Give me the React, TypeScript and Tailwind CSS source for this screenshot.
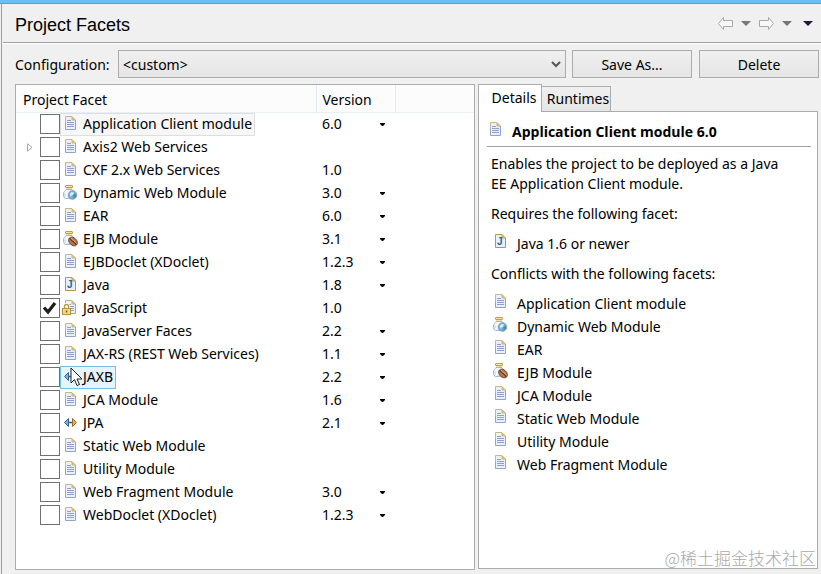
import { useState } from "react";

type IconKind = "doc" | "web" | "ejb" | "java" | "locked" | "arrows";

interface Facet {
  name: string;
  icon: IconKind;
  versions?: string[];
  expandable?: boolean;
}

const FACETS: Facet[] = [
  { name: "Application Client module", icon: "doc", versions: ["6.0", "5.0"] },
  { name: "Axis2 Web Services", icon: "doc", expandable: true },
  { name: "CXF 2.x Web Services", icon: "doc", versions: ["1.0"] },
  { name: "Dynamic Web Module", icon: "web", versions: ["3.0", "2.5"] },
  { name: "EAR", icon: "doc", versions: ["6.0", "5.0"] },
  { name: "EJB Module", icon: "ejb", versions: ["3.1", "3.0"] },
  { name: "EJBDoclet (XDoclet)", icon: "doc", versions: ["1.2.3", "1.2.2"] },
  { name: "Java", icon: "java", versions: ["1.8", "1.7"] },
  { name: "JavaScript", icon: "locked", versions: ["1.0"] },
  { name: "JavaServer Faces", icon: "doc", versions: ["2.2", "2.1"] },
  { name: "JAX-RS (REST Web Services)", icon: "doc", versions: ["1.1", "1.0"] },
  { name: "JAXB", icon: "arrows", versions: ["2.2", "2.1"] },
  { name: "JCA Module", icon: "doc", versions: ["1.6", "1.5"] },
  { name: "JPA", icon: "arrows", versions: ["2.1", "2.0"] },
  { name: "Static Web Module", icon: "doc" },
  { name: "Utility Module", icon: "doc" },
  { name: "Web Fragment Module", icon: "doc", versions: ["3.0", "2.5"] },
  { name: "WebDoclet (XDoclet)", icon: "doc", versions: ["1.2.3", "1.2.2"] },
];

const CONFLICTS: { name: string; icon: IconKind }[] = [
  { name: "Application Client module", icon: "doc" },
  { name: "Dynamic Web Module", icon: "web" },
  { name: "EAR", icon: "doc" },
  { name: "EJB Module", icon: "ejb" },
  { name: "JCA Module", icon: "doc" },
  { name: "Static Web Module", icon: "doc" },
  { name: "Utility Module", icon: "doc" },
  { name: "Web Fragment Module", icon: "doc" },
];

function DocShape() {
  return (
    <>
      <path d="M3.5.5H10L13.5 4v9.5h-10z" fill="#e9f0fa" />
      <path d="M3.5 8V.5H10L13.5 4" fill="none" stroke="#c9b684" />
      <path d="M3.5 7v6.500h10V4" fill="none" stroke="#94a3c8" />
      <path d="M10 1v3h3z" fill="#e3c67c" stroke="#d3b56c" />
      <path d="M5 4.500h4M5 6.500h7M5 8.500h7M5 10.500h7" stroke="#8c9fd0" />
    </>
  );
}

function JarShape() {
  return (
    <>
      <path d="M4 4.500h6c0 1 2.500 2 2.500 4s-1 5-2.500 5H3.500C2 13.500 1.500 11 1.500 9c0-2.500 2-3 2.500-4.500z" fill="#f3f8fe" stroke="#9db1d3" />
      <path d="M3 8.500v3M5 13h4" stroke="#b9cfec" />
      <rect x="3.500" y=".5" width="7" height="2" rx=".5" fill="#fbeab4" stroke="#c89c2e" />
      <path d="M4 4h6" stroke="#d9b659" />
    </>
  );
}

function FacetIcon({ kind }: { kind: IconKind }) {
  return (
    <svg viewBox="0 0 16 16" className="h-4 w-4 shrink-0" aria-hidden="true">
      {kind === "doc" && <DocShape />}
      {kind === "web" && (
        <>
          <JarShape />
          <circle cx="10.500" cy="10" r="4.300" fill="#6fabdc" stroke="#7394c4" strokeWidth=".8" />
          <path d="M7.500 9l2-2 2.500.5-.5 2-2 1-.5 2z" fill="#d3f0e6" />
          <path d="M11.500 9.500l2.500-.5v2.500l-2.500 2z" fill="#3f9a68" />
        </>
      )}
      {kind === "ejb" && (
        <>
          <JarShape />
          <ellipse cx="11" cy="10.500" rx="5" ry="3.600" transform="rotate(45 11 10.500)" fill="#b5784a" stroke="#74401f" strokeWidth=".9" />
          <path d="M8 7c0 3 5.500 3.500 6 7" fill="none" stroke="#5f3115" strokeWidth="1.100" />
          <path d="M8.800 6.800c1 2.500 4.500 3 5.500 5.500" fill="none" stroke="#e8bf9a" strokeWidth=".8" />
        </>
      )}
      {kind === "java" && (
        <>
          <path d="M3.500.5H10L13.500 4v9.500h-10z" fill="#e6f2fb" stroke="#b9934a" />
          <path d="M10 1v3h3z" fill="#e3c67c" stroke="#c9a458" />
          <text x="5" y="11" fontSize="10" fontWeight="700" fontFamily="Liberation Sans, sans-serif" fill="#24659c">
            J
          </text>
        </>
      )}
      {kind === "locked" && (
        <>
          <DocShape />
          <path d="M2.500 9V6.500a2 2 0 0 1 4 0V9" fill="none" stroke="#fff" strokeWidth="3" />
          <path d="M2.500 9V6.500a2 2 0 0 1 4 0V9" fill="none" stroke="#b9973c" strokeWidth="1.300" />
          <rect x=".5" y="8.500" width="8" height="6" fill="#f0d98a" stroke="#b8923a" />
          <path d="M4.500 10.500v2" stroke="#7b5710" strokeWidth="1.500" />
        </>
      )}
      {kind === "arrows" && (
        <>
          <path d="M6 7.500h5" stroke="#35597f" strokeWidth="1.500" />
          <path d="M6.500 3.500v8l-4-4z" fill="#77b0e2" stroke="#336494" />
          <path d="M10.500 3.500v8l4-4z" fill="#eba84d" stroke="#a96a18" />
        </>
      )}
    </svg>
  );
}

function HistoryArrow({ forward = false }: { forward?: boolean }) {
  return (
    <svg viewBox="0 0 15 13" className="h-[13px] w-[15px]" aria-hidden="true">
      <path
        d={forward ? "M14.500 6.500l-5-6v3h-9v6h9v3z" : "M.5 6.500l5-6v3h9v6h-9v3z"}
        fill="#f8f8f8"
        stroke="#a9a9a9"
        strokeLinejoin="round"
      />
    </svg>
  );
}

function Triangle() {
  return (
    <svg viewBox="0 0 10 5" className="h-[5px] w-[10px]" fill="currentColor" aria-hidden="true">
      <path d="M0 0h10L5 5z" />
    </svg>
  );
}

function Pointer() {
  return (
    <svg viewBox="0 0 13 20" className="pointer-events-none absolute left-[9px] top-0 h-5 w-[13px]" aria-hidden="true">
      <path d="M1 1v15l3.500-3.500L7 18.500l2.500-1L7 12h5z" fill="#fff" stroke="#222" />
    </svg>
  );
}

function highlightClass(name: string, selected: string) {
  if (name === "JAXB") return "border-[#70c0e7] bg-[#e5f3fb]";
  if (name === selected) return "border-[#dedede] bg-[#f7f7f7]";
  return "border-transparent";
}

interface FacetRowProps {
  facet: Facet;
  checked: boolean;
  selected: string;
  onToggle: () => void;
  onSelect: () => void;
}

function FacetRow({ facet, checked, selected, onToggle, onSelect }: FacetRowProps) {
  const { name, icon, versions, expandable } = facet;
  return (
    <tr className="h-[23px]" onClick={onSelect}>
      <td className="p-0">
        <div className="flex h-[23px] items-center">
          <div className="flex w-6 shrink-0 justify-center pl-1">
            {expandable && (
              <button aria-label={`Expand ${name}`}>
                <svg viewBox="0 0 6 9" className="h-[9px] w-[6px]" fill="none" stroke="#a6a6a6" aria-hidden="true">
                  <path d="M.5.8v7.400L5 4.500z" />
                </svg>
              </button>
            )}
          </div>
          <span className="grid h-5 w-5 shrink-0">
            <input
              id={`facet-${name}`}
              type="checkbox"
              checked={checked}
              onChange={onToggle}
              className="col-start-1 row-start-1 h-5 w-5 appearance-none border border-[#707070] bg-white"
            />
            {checked && (
              <svg viewBox="0 0 20 20" className="pointer-events-none col-start-1 row-start-1 h-5 w-5" aria-hidden="true">
                <path d="M4 9.500l4 4.500 7-9" fill="none" stroke="#1e1e1e" strokeWidth="3.200" />
              </svg>
            )}
          </span>
          <label
            htmlFor={`facet-${name}`}
            className={`relative flex h-[23px] items-center gap-[5px] whitespace-nowrap border pl-px pr-[2px] ${highlightClass(name, selected)}`}
          >
            <FacetIcon kind={icon} />
            <span>{name}</span>
            {name === "JAXB" && <Pointer />}
          </label>
        </div>
      </td>
      <td className="p-0">
        {versions && versions.length === 1 && <span className="pl-[6px]">{versions[0]}</span>}
        {versions && versions.length > 1 && (
          <div className="grid items-center">
            <select
              aria-label={`${name} version`}
              className="col-start-1 row-start-1 h-[22px] w-full appearance-none bg-transparent pl-[6px]"
            >
              {versions.map((v) => (
                <option key={v}>{v}</option>
              ))}
            </select>
            <svg viewBox="0 0 5 3" className="pointer-events-none col-start-1 row-start-1 mr-[10px] h-[3px] w-[5px] justify-self-end" aria-hidden="true">
              <path d="M0 0h5v1L3 3H2L0 1z" />
            </svg>
          </div>
        )}
      </td>
      <td />
    </tr>
  );
}

const BUTTON =
  "h-7 w-[120px] shrink-0 border border-[#acacac] bg-linear-to-b from-[#f0f0f0] to-[#e5e5e5] pt-px";

export default function App() {
  const [checked, setChecked] = useState<string[]>(["JavaScript"]);
  const [selected, setSelected] = useState("Application Client module");
  const [tab, setTab] = useState("Details");

  function toggle(name: string) {
    setChecked((prev) => (prev.includes(name) ? prev.filter((n) => n !== name) : [...prev, name]));
  }

  return (
    <div className="flex min-h-screen flex-col bg-[#f0f0f0] font-['Noto_Sans','Open_Sans',sans-serif] text-sm leading-5 text-black">
      <div className="h-1 border-b border-[#569fce] bg-[#67c0f3]" />
      <div className="ml-px flex flex-1 flex-col border-l border-[#a0a0a0]">
        <header className="ml-px flex h-[39px] items-center justify-between border-b border-[#a0a0a0] pl-3 pr-2">
          <h1 className="pt-[3px] font-['Liberation_Sans',sans-serif] text-lg leading-5">Project Facets</h1>
          <div className="flex items-center gap-2 text-[#77777b]">
            <button aria-label="Back"><HistoryArrow /></button>
            <button aria-label="Back history"><Triangle /></button>
            <button aria-label="Forward"><HistoryArrow forward /></button>
            <button aria-label="Forward history"><Triangle /></button>
            <button aria-label="View menu" className="pl-[3px] text-[#25133f]"><Triangle /></button>
          </div>
        </header>

        <div className="flex items-center border-t border-white py-[6px] pl-[13px] pr-[2px]">
          <label htmlFor="configuration" className="w-[103px] shrink-0 pt-[2px]">Configuration:</label>
          <div className="mr-[6px] grid flex-1 items-center">
            <select
              id="configuration"
              className="col-start-1 row-start-1 h-7 w-full appearance-none border border-[#acacac] bg-linear-to-b from-[#f0f0f0] to-[#e5e5e5] pl-1 pt-px"
            >
              <option>&lt;custom&gt;</option>
            </select>
            <svg viewBox="0 0 10 7" className="pointer-events-none col-start-1 row-start-1 mr-[5px] h-[7px] w-[10px] justify-self-end" aria-hidden="true">
              <path d="M1 1l4 4 4-4" fill="none" stroke="#555" strokeWidth="2" />
            </svg>
          </div>
          <button className={`${BUTTON} mr-[7px]`}>Save As...</button>
          <button className={BUTTON}>Delete</button>
        </div>

        <main className="grid flex-1 grid-cols-[460fr_340fr] gap-[3px] pb-1 pl-[13px] pr-[3px]">
          <section className="border border-[#acacac] bg-white">
            <table className="w-full table-fixed border-collapse text-left">
              <colgroup>
                <col className="w-[300px]" />
                <col className="w-[79px]" />
                <col />
              </colgroup>
              <thead>
                <tr className="h-[27px] border-b border-[#e8eff8] bg-[#fcfcfc]">
                  <th className="border-r border-[#e1ecf8] p-0 pl-[7px] pt-1 font-normal">Project Facet</th>
                  <th className="border-r border-[#e1ecf8] p-0 pl-[6px] pt-1 font-normal">Version</th>
                  <td />
                </tr>
              </thead>
              <tbody>
                {FACETS.map((facet) => (
                  <FacetRow
                    key={facet.name}
                    facet={facet}
                    checked={checked.includes(facet.name)}
                    selected={selected}
                    onToggle={() => toggle(facet.name)}
                    onSelect={() => setSelected(facet.name)}
                  />
                ))}
              </tbody>
            </table>
          </section>

          <section className="flex min-w-0 flex-col pb-px">
            <div role="tablist" className="flex items-end">
              {["Details", "Runtimes"].map((t) => (
                <button
                  key={t}
                  role="tab"
                  aria-selected={tab === t}
                  onClick={() => setTab(t)}
                  className={
                    tab === t
                      ? "z-10 -mb-px h-7 w-16 border border-b-0 border-[#acacac] bg-white pb-px pl-2"
                      : "h-[25px] w-[69px] border border-b-0 border-l-0 border-[#acacac] bg-linear-to-b from-[#f0f0f0] to-[#e5e5e5] pl-1"
                  }
                >
                  {t}
                </button>
              ))}
            </div>
            <div role="tabpanel" className="flex flex-1 flex-col border border-[#acacac] bg-white">
              <h2 className="ml-2 mr-[6px] flex h-[35px] items-start gap-[9px] border-b border-[#a0a0a0] pt-[10px] font-['Open_Sans',sans-serif] font-bold">
                <FacetIcon kind="doc" />
                <span>Application Client module 6.0</span>
              </h2>
              <div className="pl-3 pr-6 pt-[7px]">
                <p>Enables the project to be deployed as a Java EE Application Client module.</p>
                <p className="mt-[10px]">Requires the following facet:</p>
                <ul className="mb-[9px] mt-2 pl-px">
                  <li className="flex h-[23px] items-start gap-[9px] pt-[2px]">
                    <FacetIcon kind="java" />
                    <span>Java 1.6 or newer</span>
                  </li>
                </ul>
                <p>Conflicts with the following facets:</p>
                <ul className="my-2 pl-px">
                  {CONFLICTS.map(({ name, icon }) => (
                    <li key={name} className="flex h-[23px] items-start gap-[9px] pt-[2px]">
                      <FacetIcon kind={icon} />
                      <span>{name}</span>
                    </li>
                  ))}
                </ul>
              </div>
              <div className="mt-auto self-end pr-px font-['Noto_Sans_CJK_SC',sans-serif] text-[17px] font-light leading-5 text-[#aaa]">
                @稀土掘金技术社区
              </div>
            </div>
          </section>
        </main>
      </div>
    </div>
  );
}
